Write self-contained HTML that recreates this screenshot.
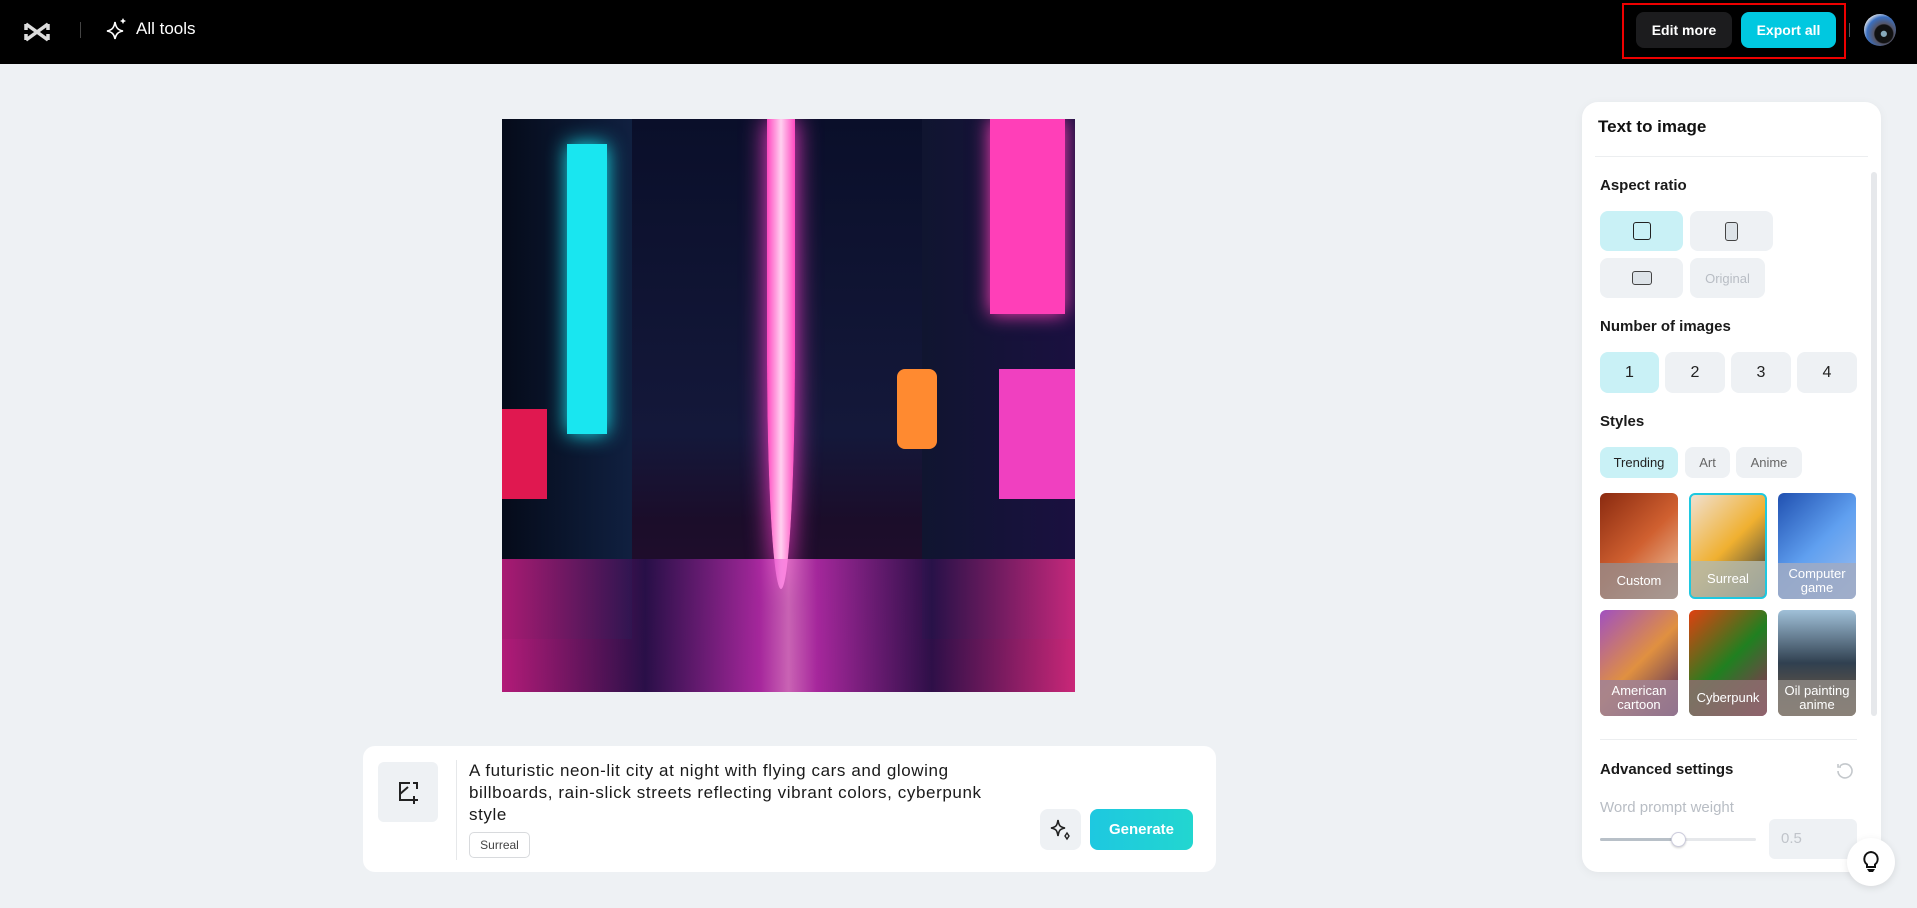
<!DOCTYPE html>
<html><head><meta charset="utf-8"><style>
*{box-sizing:border-box;margin:0;padding:0}
body{width:1917px;height:908px;overflow:hidden;background:#eef1f4;font-family:"Liberation Sans",sans-serif;position:relative;color:#111}
.hdr{position:absolute;left:0;top:0;width:1917px;height:64px;background:#000}
.abs{position:absolute}
.btn{position:absolute;border-radius:8px;display:flex;align-items:center;justify-content:center;font-weight:bold;font-size:14px;color:#fff}
.panel{position:absolute;left:1582px;top:102px;width:299px;height:770px;background:#fff;border-radius:16px;box-shadow:0 2px 10px rgba(0,0,0,.05)}
.lbl{position:absolute;left:1600px;font-size:15px;font-weight:bold;color:#1a1a1a}
.g{position:absolute;background:#eef1f4;border-radius:8px;display:flex;align-items:center;justify-content:center;font-size:16px;color:#222}
.sel{background:#c9f1f6}
.card{position:absolute;width:78px;height:106px;border-radius:6px;overflow:hidden}
.card span{position:absolute;left:0;right:0;bottom:0;height:36px;display:flex;align-items:center;justify-content:center;text-align:center;color:#fff;font-size:13px;line-height:14px;background:rgba(150,140,140,.8)}
</style></head><body>
<div class="hdr"></div>
<svg class="abs" style="left:22px;top:20px" width="30" height="24" viewBox="0 0 30 24"><path d="M4 4l22 16M4 20L26 4M4 4v6M4 20v-6M26 4v6M26 20v-6" stroke="#ddd" stroke-width="3.5" fill="none"/></svg>
<div class="abs" style="left:80px;top:22px;width:1px;height:16px;background:#444"></div>
<svg class="abs" style="left:106px;top:17px" width="22" height="24" viewBox="0 0 22 24"><path d="M9 5C10 11 12 13 17 14C12 15 10 17 9 22C8 17 6 15 1 14C6 13 8 11 9 5Z" stroke="#fff" stroke-width="1.6" fill="none"/><path d="M17 1l1 2 2 1-2 1-1 2-1-2-2-1 2-1z" fill="#fff"/></svg>
<div class="abs" style="left:136px;top:19px;color:#fff;font-size:17px">All tools</div>
<div class="abs" style="left:1622px;top:3px;width:224px;height:56px;border:2px solid #e00"></div>
<div class="btn" style="left:1636px;top:12px;width:96px;height:36px;background:#1c1c1e">Edit more</div>
<div class="btn" style="left:1741px;top:12px;width:95px;height:36px;background:#00c8e0">Export all</div>
<div class="abs" style="left:1849px;top:23px;width:1px;height:14px;background:#555"></div>
<div class="abs" style="left:1864px;top:14px;width:32px;height:32px;border-radius:50%;background:radial-gradient(circle at 62% 62%,#8ab 0 10%,#111 12% 32%,#556 36%,#3a6fc0 60%,#eee 78%)"></div>

<div class="abs" style="left:502px;top:119px;width:573px;height:573px;overflow:hidden;background:linear-gradient(180deg,#0a0f2a 0%,#14183a 55%,#1b0d2a 70%,#2a0c30 100%)">
<div class="abs" style="left:0;top:0;width:130px;height:520px;background:linear-gradient(90deg,#050b1a,#102040)"></div>
<div class="abs" style="left:65px;top:25px;width:40px;height:290px;background:#19e6f0;box-shadow:0 0 20px #19e6f0"></div>
<div class="abs" style="left:0;top:290px;width:45px;height:90px;background:#e01850"></div>
<div class="abs" style="left:420px;top:0;width:153px;height:520px;background:linear-gradient(90deg,#101530,#1a1040)"></div>
<div class="abs" style="left:488px;top:0;width:75px;height:195px;background:#ff3fb8;box-shadow:0 0 18px #ff3fb8"></div>
<div class="abs" style="left:497px;top:250px;width:76px;height:130px;background:#f040c0"></div>
<div class="abs" style="left:395px;top:250px;width:40px;height:80px;background:#ff8a30;border-radius:8px"></div>
<div class="abs" style="left:265px;top:0;width:28px;height:470px;background:linear-gradient(90deg,#ff48c0,#ffd0f0,#ff48c0);box-shadow:0 0 25px #ff3fd0;border-radius:0 0 50% 50%"></div>
<div class="abs" style="left:0;top:440px;width:573px;height:133px;background:linear-gradient(90deg,#e02090 0%,#2a1050 25%,#d030c0 45%,#ff80e0 50%,#d030c0 55%,#301050 75%,#ff3090 100%);opacity:.75"></div>
</div>

<div class="abs" style="left:363px;top:746px;width:853px;height:126px;background:#fff;border-radius:12px"></div>
<div class="abs" style="left:378px;top:762px;width:60px;height:60px;background:#eef1f4;border-radius:6px"></div>
<svg class="abs" style="left:396px;top:780px" width="26" height="26" viewBox="0 0 26 26"><path d="M14 3H4v17h10M4 14l8-7M21 9V3h-4M18 16v8M14 20h8" stroke="#222" stroke-width="2" fill="none"/></svg>
<div class="abs" style="left:456px;top:760px;width:1px;height:100px;background:#e6e8ea"></div>
<div class="abs" style="left:469px;top:760px;font-size:17px;line-height:22px;color:#1a1a1a;width:545px;letter-spacing:0.6px">A futuristic neon-lit city at night with flying cars and glowing billboards, rain-slick streets reflecting vibrant colors, cyberpunk style</div>
<div class="abs" style="left:469px;top:832px;width:61px;height:26px;border:1px solid #d8dadd;border-radius:5px;font-size:12px;color:#444;display:flex;align-items:center;justify-content:center">Surreal</div>
<div class="abs" style="left:1040px;top:809px;width:41px;height:41px;background:#eef1f4;border-radius:8px"></div>
<svg class="abs" style="left:1049px;top:818px" width="24" height="24" viewBox="0 0 24 24"><path d="M9 2C10 8 11 9 16 10C11 11 10 12 9 18C8 12 7 11 2 10C7 9 8 8 9 2Z" stroke="#222" stroke-width="1.6" fill="none"/><path d="M18 15l2 3-2 3-2-3z" stroke="#222" stroke-width="1.4" fill="none"/></svg>
<div class="btn" style="left:1090px;top:809px;width:103px;height:41px;background:linear-gradient(90deg,#1ec8e0,#22d6d0);font-size:15px">Generate</div>

<div class="panel"></div>
<div class="abs" style="left:1598px;top:117px;font-size:17px;font-weight:bold">Text to image</div>
<div class="abs" style="left:1595px;top:156px;width:273px;height:1px;background:#eceef0"></div>
<div class="abs" style="left:1871px;top:172px;width:6px;height:544px;background:#e6e8eb;border-radius:3px"></div>
<div class="lbl" style="top:177px">Aspect ratio</div>
<div class="g sel" style="left:1600px;top:211px;width:83px;height:40px"><div style="width:18px;height:18px;border:1.5px solid #222;border-radius:3px"></div></div>
<div class="g" style="left:1690px;top:211px;width:83px;height:40px"><div style="width:13px;height:19px;border:1.5px solid #444;border-radius:3px;background:#dde3e8"></div></div>
<div class="g" style="left:1600px;top:258px;width:83px;height:40px"><div style="width:20px;height:14px;border:1.5px solid #444;border-radius:3px;background:#dde3e8"></div></div>
<div class="g" style="left:1690px;top:258px;width:75px;height:40px;font-size:13px;color:#b8bdc4">Original</div>
<div class="lbl" style="top:318px">Number of images</div>
<div class="g sel" style="left:1600px;top:352px;width:59px;height:41px">1</div>
<div class="g" style="left:1665px;top:352px;width:60px;height:41px">2</div>
<div class="g" style="left:1731px;top:352px;width:60px;height:41px">3</div>
<div class="g" style="left:1797px;top:352px;width:60px;height:41px">4</div>
<div class="lbl" style="top:413px">Styles</div>
<div class="g sel" style="left:1600px;top:447px;width:78px;height:31px;font-size:13px">Trending</div>
<div class="g" style="left:1685px;top:447px;width:45px;height:31px;font-size:13px;color:#666">Art</div>
<div class="g" style="left:1736px;top:447px;width:66px;height:31px;font-size:13px;color:#666">Anime</div>
<div class="card" style="left:1600px;top:493px;background:linear-gradient(135deg,#8a2a10,#d06030,#f0d0b0)"><span>Custom</span></div>
<div class="card" style="left:1689px;top:493px;background:linear-gradient(135deg,#f0e0d0,#f0b030,#203040);border:2px solid #1ec8e0"><span style="background:rgba(180,185,170,.85)">Surreal</span></div>
<div class="card" style="left:1778px;top:493px;background:linear-gradient(135deg,#2050b0,#60a0f0,#a0c0f0)"><span style="background:rgba(160,170,195,.85)">Computer<br>game</span></div>
<div class="card" style="left:1600px;top:610px;background:linear-gradient(135deg,#a050c0,#e09040,#402060)"><span style="background:rgba(160,130,150,.85)">American<br>cartoon</span></div>
<div class="card" style="left:1689px;top:610px;background:linear-gradient(135deg,#e04010,#208020,#a02060)"><span style="background:rgba(140,110,110,.85)">Cyberpunk</span></div>
<div class="card" style="left:1778px;top:610px;background:linear-gradient(180deg,#a0c0d8,#304050,#806040)"><span style="background:rgba(140,135,130,.85)">Oil painting<br>anime</span></div>
<div class="abs" style="left:1600px;top:739px;width:257px;height:1px;background:#eceef0"></div>
<div class="lbl" style="top:761px">Advanced settings</div>
<svg class="abs" style="left:1836px;top:761px" width="18" height="18" viewBox="0 0 18 18"><path d="M4 5A7 7 0 1 1 2 10M2 3v3h3" stroke="#c4c8cc" stroke-width="1.6" fill="none"/></svg>
<div class="abs" style="left:1600px;top:799px;font-size:15px;color:#b8bdc4">Word prompt weight</div>
<div class="abs" style="left:1600px;top:838px;width:156px;height:3px;background:#e6e8eb;border-radius:2px"></div>
<div class="abs" style="left:1600px;top:838px;width:78px;height:3px;background:#b8c0c8;border-radius:2px"></div>
<div class="abs" style="left:1671px;top:832px;width:15px;height:15px;border-radius:50%;background:#fff;border:1px solid #ccd;box-shadow:0 1px 2px rgba(0,0,0,.2)"></div>
<div class="abs" style="left:1769px;top:819px;width:88px;height:40px;background:#eef1f4;border-radius:6px;font-size:15px;color:#c0c4ca;padding:11px 0 0 12px">0.5</div>
<div class="abs" style="left:1847px;top:838px;width:48px;height:48px;border-radius:50%;background:#fff;box-shadow:0 2px 8px rgba(0,0,0,.1)"></div>
<svg class="abs" style="left:1860px;top:850px" width="22" height="24" viewBox="0 0 22 24"><path d="M11 2a7 7 0 0 0-4 12.5V17h8v-2.5A7 7 0 0 0 11 2Z" stroke="#111" stroke-width="2" fill="none"/><path d="M7 19h8l-2 3h-4z" fill="#111"/></svg>
</body></html>
